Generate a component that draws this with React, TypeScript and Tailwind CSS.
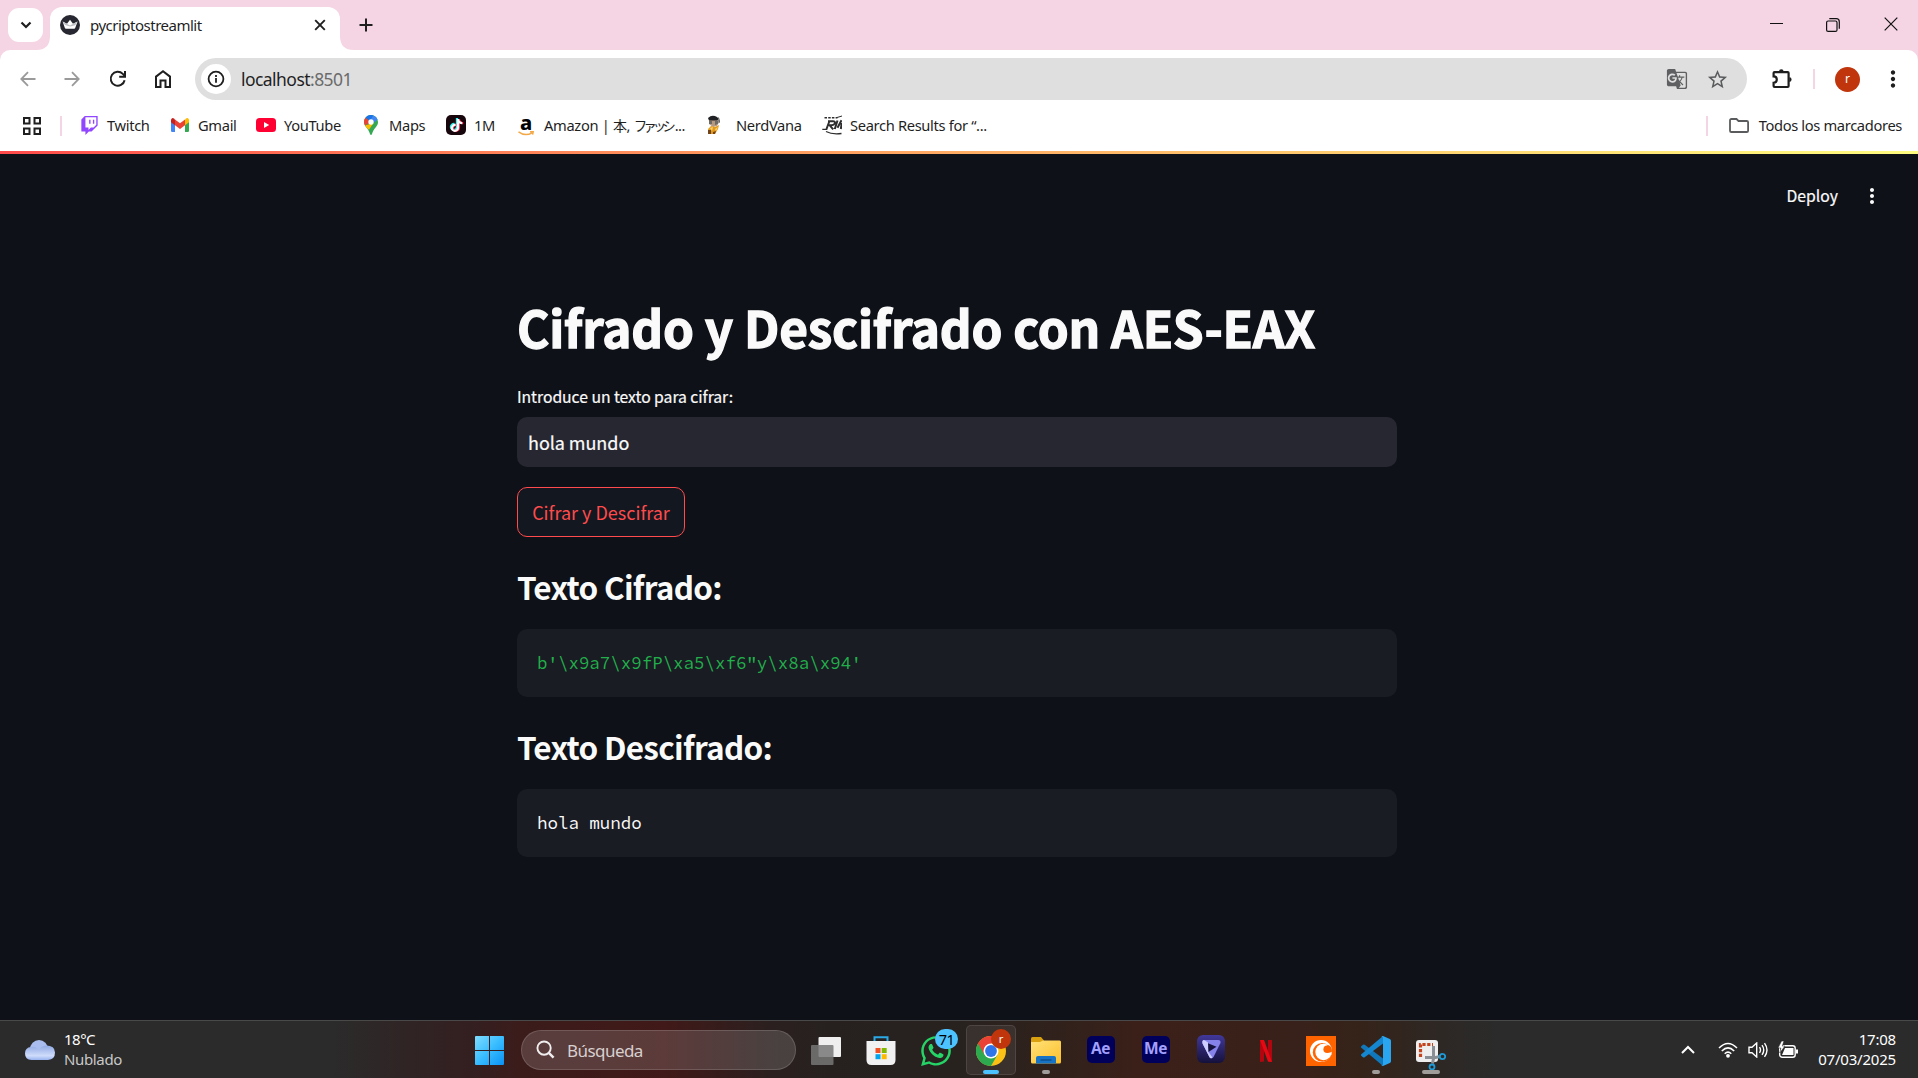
import type { ReactNode } from "react";
import { FaWhatsapp, FaTiktok } from "react-icons/fa";
import { SiTwitch } from "react-icons/si";
import { MdMoreVert, MdGTranslate, MdStarBorder } from "react-icons/md";

function CrownIcon() {
  return (
    <svg width="20" height="20" viewBox="0 0 20 20" className="shrink-0">
      <circle cx="10" cy="10" r="10" fill="#262730" />
      <path d="M2.6 6.6 7 8.8 10 4.8l3 4 4.6-2.2-2.3 6.2q-.3.9-1.2.9H6q-.9 0-1.2-.9z" fill="#fff" />
      <path d="M2.6 6.6 10 10.4l7.4-3.8-2.1 3.6L10 11.6l-5-1.6z" fill="#bfc0c4" />
    </svg>
  );
}

function TabStrip() {
  return (
    <div className="flex h-[50px] bg-[#f5d4e3] text-[#1f1f1f]">
      <div className="ml-2 mt-2 flex h-[34px] w-[35px] items-center justify-center rounded-[11px] bg-white">
        <svg width="12" height="8" viewBox="0 0 12 8" fill="none" stroke="#1f1f1f" strokeWidth="2.2"><path d="m1.5 1.5 4.5 4.5 4.5-4.5" /></svg>
      </div>
      <div className="flex w-[7px] items-end">
        <svg width="14" height="14" viewBox="0 0 14 14" className="-ml-[7px] shrink-0"><path d="M14 0v14H0Q14 14 14 0z" fill="#fff" /></svg>
      </div>
      <div className="mt-[7px] flex h-[43px] w-[290px] items-center rounded-t-[12px] bg-white pb-[7px] pl-[10px] pr-[14px]">
        <CrownIcon />
        <span className="ml-[10px] flex-1 whitespace-nowrap text-[15px] tracking-[-0.5px]">pycriptostreamlit</span>
        <svg width="12" height="12" viewBox="0 0 12 12" stroke="#1f1f1f" strokeWidth="1.9"><path d="m1.2 1.2 9.6 9.6M10.8 1.2 1.2 10.8" /></svg>
      </div>
      <div className="flex items-end">
        <svg width="14" height="14" viewBox="0 0 14 14"><path d="M0 0v14h14Q0 14 0 0z" fill="#fff" /></svg>
      </div>
      <svg width="14" height="14" viewBox="0 0 14 14" stroke="#1f1f1f" strokeWidth="2" className="ml-[5px] mt-[18px]"><path d="M7 .5v13M.5 7h13" /></svg>
      <div className="ml-auto mt-[17px] flex pr-5">
        <svg width="13" height="15" viewBox="0 0 13 15" className="mr-[43px]"><path d="M0 6.5h13" stroke="#111" strokeWidth="1" /></svg>
        <svg width="14" height="14" viewBox="0 0 14 14" fill="none" stroke="#111" strokeWidth="1.2" className="mr-[44px] mt-px"><rect x=".6" y="3" width="10.4" height="10.4" rx="1.5" /><path d="M3.3.7h7q3 0 3 3v7" /></svg>
        <svg width="14" height="14" viewBox="0 0 14 14" stroke="#111" strokeWidth="1.2"><path d="m.7.7 12.6 12.6M13.3.7.7 13.3" /></svg>
      </div>
    </div>
  );
}

function Arrow({ flip }: { flip?: boolean }) {
  return (
    <svg width="16" height="16" viewBox="0 0 16 16" fill="none" stroke="#9a9a9a" strokeWidth="1.8" className={flip ? "rotate-180" : ""}>
      <path d="M15.5 8H1.5M8 1.2 1.300 8 8 14.8" />
    </svg>
  );
}

function Toolbar() {
  return (
    <div className="flex h-[58px] items-center rounded-t-[10px] bg-white">
      <div className="flex w-[195px] shrink-0 items-center pl-5">
        <Arrow />
        <div className="ml-[28px]"><Arrow flip /></div>
        <svg width="18" height="18" viewBox="0 0 18 18" fill="none" stroke="#1f1f1f" strokeWidth="2" className="ml-[29px]">
          <path d="M15.6 10.2A7 7 0 1 1 13.8 3.900L16 6.2" /><path d="M16 1v5.8h-5.8" />
        </svg>
        <svg width="16" height="18" viewBox="0 0 16 18" fill="none" stroke="#1f1f1f" strokeWidth="2" className="ml-[28px]">
          <path d="M1 6.600 8 1.300l7 5.300V17h-4.500v-6.500h-5V17H1z" />
        </svg>
      </div>
      <div className="flex h-[42px] w-[1552px] shrink-0 items-center rounded-full bg-[#dfdfdf] pl-[6px] pr-[18px]">
        <div className="flex size-[30px] items-center justify-center rounded-full bg-white">
          <svg width="18" height="18" viewBox="0 0 18 18" fill="none" stroke="#1f1f1f" strokeWidth="1.8"><circle cx="9" cy="9" r="7.4" /><path d="M9 8v4.800M9 5v1.900" /></svg>
        </div>
        <span className="ml-[10px] flex-1 text-[17.5px] tracking-[-0.55px] text-[#1f1f1f]">localhost<span className="text-[#6b6b6b]">:8501</span></span>
        <MdGTranslate size={22} color="#5f6062" />
        <MdStarBorder size={23} color="#5a5b5d" className="ml-[18px]" />
      </div>
      <svg width="22" height="22" viewBox="0 0 22 22" fill="none" stroke="#1f1f1f" strokeWidth="2.2" className="ml-[24px]">
        <path d="M3.5 4.2h13.200q.9 0 .9.900v13q0 .9-.9.900H3.500q-.9 0-.9-.9v-3.300q3.200 0 3.200-3.200T2.600 8.400V5.100q0-.9.9-.9z" />
        <path d="M8 3.500a2.300 2.300 0 0 1 4.600 0zM18.300 9.300a2.300 2.300 0 0 1 0 4.600z" fill="#1f1f1f" stroke="none" />
      </svg>
      <div className="ml-5 h-5 w-[2px] bg-[#f5d4e3]" />
      <div className="ml-[20px] flex size-[25px] items-center justify-center rounded-full bg-[#c0350c] text-[12px] text-white">r</div>
      <MdMoreVert size={26} color="#1f1f1f" className="ml-[20px]" />
    </div>
  );
}

function YoutubeIcon() {
  return <svg width="20" height="14" viewBox="0 0 20 14"><rect width="20" height="14" rx="3.5" fill="#f03" /><path d="m8 4 5.200 3L8 10z" fill="#fff" /></svg>;
}

function GmailIcon() {
  return (
    <svg width="18" height="14" viewBox="0 0 18 14">
      <path d="M0 3h4v11H1.300Q0 14 0 12.700z" fill="#4285f4" />
      <path d="M14 3h4v9.700q0 1.300-1.300 1.300H14z" fill="#34a853" />
      <path d="M14 1.400 15 .6q2-1.400 3 1v2.600L14 7.300z" fill="#fbbc04" />
      <path d="M4 1.400 3 .6q-2-1.400-3 1v2.600l4 3.100z" fill="#c5221f" />
      <path d="M4 1.400 9 5.200l5-3.800v5.900l-5 3.800-5-3.800z" fill="#ea4335" />
    </svg>
  );
}

function MapsIcon() {
  return (
    <svg width="14" height="20" viewBox="0 0 14 20">
      <path d="M7 0a7 7 0 0 1 7 7c0 4.800-4.400 6-6 12q-1 2-2 0C4.500 13 0 11.800 0 7a7 7 0 0 1 7-7z" fill="#34a853" />
      <path d="M1 10.500 9.500 8 5 14.800Q2 12.500 1 10.500z" fill="#fbbc04" />
      <path d="M1.600 2.500 7 7 1 10.600Q-1.200 6 1.600 2.500z" fill="#ea4335" />
      <path d="M1.600 2.500Q5-1.200 9.400.4L6 6.500z" fill="#1a73e8" />
      <path d="M9.300.4q3.200 1 4.300 4.300L8.500 8.500 6 6z" fill="#4285f4" />
      <circle cx="7" cy="7" r="2.700" fill="#fff" />
    </svg>
  );
}

function TiktokIcon() {
  return (
    <div className="relative size-5 rounded-[5px] bg-[#17070c]">
      <FaTiktok size={13} color="#25f4ee" className="absolute left-[3px] top-[3px]" />
      <FaTiktok size={13} color="#fe2c55" className="absolute left-[4.5px] top-[4px]" />
      <FaTiktok size={13} color="#fff" className="absolute left-[3.7px] top-[3.5px]" />
    </div>
  );
}

function AmazonIcon() {
  return (
    <div className="relative h-5 w-4 text-center">
      <span className="absolute inset-x-0 -top-[3px] font-['Noto_Sans'] text-[20px] font-extrabold leading-[20px] text-black">a</span>
      <svg width="16" height="5" viewBox="0 0 16 5" fill="none" stroke="#f3a847" strokeWidth="1.5" className="absolute bottom-0 left-0"><path d="M.5.8q7 5 13.500 1M12 .7l3.200-.1-.6 3" /></svg>
    </div>
  );
}

function NerdIcon() {
  return (
    <svg width="12" height="20" viewBox="0 0 12 20">
      <path d="M1 5h8l2 2-2 4-4 1-4-3z" fill="#b69a80" />
      <path d="M0 3q4-4 9-1l2 2-2 1.500H1z" fill="#202124" />
      <path d="M1 6h3v3H1zM7 6l4-1-1 4-3 1z" fill="#6e6a66" />
      <path d="m3 11 4 1 4-2-1 4-3 5H1l-1-5z" fill="#e39a1c" />
      <path d="m2 13 3-1-1 4zM7 14l3-2-2 4z" fill="#fbd36b" />
      <path d="M0 15h3v4H0zM5 17l3-1-1 3H5z" fill="#70441c" />
      <path d="M10.5 2.500 12 8" stroke="#5b5b5b" />
    </svg>
  );
}

function RimIcon() {
  return (
    <svg width="20" height="20" viewBox="0 0 20 20" fill="none" stroke="#2d2d2d">
      <path d="M2.5 2.700h13" strokeWidth="1.6" strokeDasharray="2.5 1.2" />
      <path d="M15 2.500 20 1" strokeWidth="1" />
      <path d="M6 6.200h5q2.500 0 1.700 2.300-.6 1.800-3.200 1.800H7.700l3.500 4M7.300 6.500 4.500 14M15.500 5.500 12.800 14M19.500 5.200l-4 7.500M19.800 8l-1 6" strokeWidth="2" />
      <path d="M.3 14.300h5M4 16.500q6 3.200 15.500 2" strokeWidth="1.3" />
    </svg>
  );
}

function Bookmark({ icon, children, className = "" }: { icon: ReactNode; children: ReactNode; className?: string }) {
  return (
    <div className={`flex shrink-0 items-center ${className}`}>
      <div className="flex w-5 justify-center">{icon}</div>
      <span className="ml-2 whitespace-nowrap">{children}</span>
    </div>
  );
}

function BookmarksBar() {
  return (
    <div className="flex h-[43px] items-center bg-white pb-[8px] text-[14.7px] tracking-[-0.34px] text-[#1f1f1f]">
      <svg width="18" height="18" viewBox="0 0 18 18" fill="none" stroke="#1f1f1f" strokeWidth="2" className="ml-[23px] shrink-0">
        <path d="M1 1h5.500v5.500H1zM11.500 1H17v5.500h-5.500zM1 11.500h5.500V17H1zM11.500 11.500H17V17h-5.500z" />
      </svg>
      <div className="ml-[19px] h-5 w-[2px] bg-[#f5d4e3]" />
      <Bookmark className="ml-[17px] w-[91px]" icon={<SiTwitch size={19} color="#9146ff" />}>Twitch</Bookmark>
      <Bookmark className="w-[86px]" icon={<GmailIcon />}>Gmail</Bookmark>
      <Bookmark className="w-[105px]" icon={<YoutubeIcon />}>YouTube</Bookmark>
      <Bookmark className="w-[85px]" icon={<MapsIcon />}>Maps</Bookmark>
      <Bookmark className="w-[70px]" icon={<TiktokIcon />}>1M</Bookmark>
      <Bookmark className="w-[188px]" icon={<AmazonIcon />}>Amazon | <span className="text-[14px]">本</span>, <span className="text-[13.5px] tracking-[-4px]">ファッシ</span><span className="ml-[3px] tracking-[-0.5px]">...</span></Bookmark>
      <Bookmark className="w-[118px]" icon={<NerdIcon />}><span className="ml-[4px]">NerdVana</span></Bookmark>
      <Bookmark icon={<RimIcon />}>Search Results for “...</Bookmark>
      <div className="ml-auto h-5 w-[2px] bg-[#f5d4e3]" />
      <svg width="20" height="15" viewBox="0 0 20 15" fill="none" stroke="#5a5b5d" strokeWidth="1.8" className="ml-[21px]"><path d="M1 2.500Q1 1 2.500 1h5l2 2h8.300q1.300 0 1.300 1.300v8.400q0 1.300-1.300 1.300H2.300Q1 14 1 12.700z" /></svg>
      <span className="ml-[10px] mr-4 whitespace-nowrap tracking-[-0.35px]">Todos los marcadores</span>
    </div>
  );
}

function CodeBlock({ children, className }: { children: ReactNode; className: string }) {
  return (
    <div className={`flex h-[68px] items-center whitespace-pre rounded-[10px] bg-[#1a1c24] px-5 font-['Source_Code_Pro','DejaVu_Sans_Mono',monospace] text-[17.5px] tracking-[-0.03px] ${className}`}>
      {children}
    </div>
  );
}

function StreamlitPage() {
  return (
    <div className="h-[869px] bg-[#0e1117] font-['Noto_Sans_CJK_JP',sans-serif] text-[#fafafa]">
      <div className="h-[3px] bg-linear-to-r from-[#ff4b4b] to-[#fffd80]" />
      <div className="flex h-[84px] items-center justify-end pr-[34px]">
        <span className="mr-[22px] text-[15.75px] [-webkit-text-stroke:0.2px_#fafafa]">Deploy</span>
        <MdMoreVert size={24} color="#fafafa" />
      </div>
      <div className="ml-[517px] w-[880px] pt-[55px]">
        <h1 className="h-[68px] whitespace-nowrap text-[49.5px] font-bold leading-[68px] tracking-[-0.2px] [-webkit-text-stroke:1.3px_#fafafa]">Cifrado y Descifrado con AES-EAX</h1>
        <label className="mt-[22px] block h-[28px] text-[15.75px] leading-[28px] tracking-[-0.05px] [-webkit-text-stroke:0.2px_#fafafa]">Introduce un texto para cifrar:</label>
        <div className="mt-[6px] flex h-[50px] items-center rounded-[10px] bg-[#262730] pl-[11px] text-[18px] tracking-[-0.05px] [-webkit-text-stroke:0.2px_#fafafa]">hola mundo</div>
        <button className="mt-5 block h-[50px] w-[168px] whitespace-nowrap rounded-[10px] border border-[#ff4b4b] bg-[#131720] text-[18px] text-[#ff4b4b]">Cifrar y Descifrar</button>
        <h3 className="mt-[28px] h-[42px] text-[31.5px] font-semibold leading-[42px] tracking-[-0.7px]">Texto Cifrado:</h3>
        <CodeBlock className="mt-[22px] text-[#21b04a]">{"b'\\x9a7\\x9fP\\xa5\\xf6\"y\\x8a\\x94'"}</CodeBlock>
        <h3 className="mt-[28px] h-[42px] text-[31.5px] font-semibold leading-[42px] tracking-[-0.7px]">Texto Descifrado:</h3>
        <CodeBlock className="mt-[22px] text-[#fafafa]">hola mundo</CodeBlock>
      </div>
    </div>
  );
}

function CloudIcon() {
  return (
    <svg width="30" height="20" viewBox="0 0 30 20">
      <defs><linearGradient id="cloud" x2="0" y2="1"><stop stopColor="#8fa9e4" /><stop offset=".7" stopColor="#cfdcfb" /><stop offset="1" stopColor="#9ab3f0" /></linearGradient></defs>
      <circle cx="14" cy="9" r="9" fill="#a9bdf0" />
      <path d="M6 7q5-1 7.500 3Q16 6 21 5.500q9 0 9 7T23 20H6.500Q0 19.500 0 13.500T6 7z" fill="url(#cloud)" />
    </svg>
  );
}

function ChromeIcon() {
  return (
    <svg width="30" height="30" viewBox="0 0 30 30">
      <circle cx="15" cy="15" r="15" fill="#fbc116" />
      <path d="M2 7.500A15 15 0 0 0 15 30l6.500-11.300L15 15z" fill="#2da94f" />
      <path d="M2 7.500A15 15 0 0 1 28 7.500H15v7.500l-6.500 3.700z" fill="#ea4335" />
      <circle cx="15" cy="15" r="7.500" fill="#fff" /><circle cx="15" cy="15" r="5.900" fill="#2f74e8" />
    </svg>
  );
}

function StoreIcon() {
  return (
    <svg width="30" height="30" viewBox="0 0 30 30">
      <path d="M8.5 6V1.200h13V6" fill="none" stroke="#2aa9e6" strokeWidth="2" />
      <path d="M.5 5h29v19q0 5-5 5h-19q-5 0-5-5z" fill="#f1f1f1" />
      <path fill="#f25022" d="M9.500 12h5v5h-5z" /><path fill="#7fba00" d="M15.700 12h5v5h-5z" />
      <path fill="#00a4ef" d="M9.500 18.200h5v5h-5z" /><path fill="#ffb900" d="M15.700 18.200h5v5h-5z" />
    </svg>
  );
}

function ExplorerIcon() {
  return (
    <svg width="30" height="27" viewBox="0 0 30 27">
      <defs><linearGradient id="folder" x2="1" y2="1"><stop stopColor="#ffe178" /><stop offset="1" stopColor="#fbc02d" /></linearGradient></defs>
      <path d="M0 1.500Q0 0 1.500 0H10l3 3.500V9H0z" fill="#d9a010" />
      <path d="M0 5h9l3-1.500h16.500q1.500 0 1.500 1.500v20q0 1.500-1.500 1.500h-27Q0 26.500 0 25z" fill="url(#folder)" />
      <path d="M5 26.500V21q0-2 2-2h16q2 0 2 2v5.500z" fill="#1673c5" /><path d="M9.500 23h11" stroke="#0c4f91" strokeWidth="1.5" />
    </svg>
  );
}

function AdobeTile({ label }: { label: string }) {
  return <div className="-mt-[2px] flex h-[27px] w-7 items-center justify-center rounded-[5px] bg-[#00005b] pb-px font-['Open_Sans'] text-[15.5px] font-bold tracking-[-0.4px] text-[#a3a0ff]">{label}</div>;
}

function DavinciIcon() {
  return (
    <svg width="28" height="28" viewBox="0 0 28 28" className="-mt-1">
      <defs><linearGradient id="dv" x2="0" y2="1"><stop stopColor="#41389a" /><stop offset="1" stopColor="#15113c" /></linearGradient></defs>
      <rect width="28" height="28" rx="6" fill="url(#dv)" />
      <path d="M7 5h14q3.500.3 2.300 3.200L16.500 22q-2 2.600-4 .3L5.500 8.500Q4.800 5.300 7 5z" fill="#8583ea" />
      <path d="M5.500 8.500Q4.800 5.300 7 5l4 2.500.5 9.500 4 5.500q-2 1.500-3-.2z" fill="#cdceff" />
      <path d="m11 8.200 8.500 3.600L11.500 17z" fill="#17133f" />
    </svg>
  );
}

function NetflixIcon() {
  return (
    <svg width="12" height="22" viewBox="0 0 12 22">
      <path d="M0 0h4v21.500L0 22zM8 0h4v22l-4-.5z" fill="#b1060f" />
      <path d="M0 0h4l8 22-4-.5z" fill="#e50914" />
    </svg>
  );
}

function CrunchyrollIcon() {
  return (
    <svg width="30" height="30" viewBox="0 0 30 30">
      <path fill="#ff6400" d="M0 0h30v30H0z" />
      <circle cx="15" cy="15" r="11" fill="#fff" />
      <circle cx="16.2" cy="16.4" r="9.4" fill="#ff6400" />
      <circle cx="17.5" cy="16" r="8.2" fill="#fff" />
      <circle cx="21.200" cy="13.200" r="3.800" fill="#ff6400" />
      <path d="M21 9.500q2.800-.8 4.500 2.500.7 2 .3 4-2.500 1-4.500-.5z" fill="#ff6400" />
    </svg>
  );
}

function VscodeIcon() {
  return (
    <svg width="30" height="30" viewBox="0 0 30 30">
      <path d="M0 10.500 2 8.700q.8-.6 1.700 0L22 22.500V30L.3 11.700q-.7-.6-.3-1.200z" fill="#1177bb" />
      <path d="M0 19.500l2 1.800q.8.600 1.700 0L22 7.500V0L.3 18.300q-.7.600-.3 1.200z" fill="#1487d0" />
      <path d="M22 0 28.800 3Q30 3.500 30 4.800v20.400q0 1.300-1.200 1.800L22 30q-1 .3-1.800-.5Q22 30 22 28V2q0-2-1.800-1.500Q21-.3 22 0z" fill="#2aa5ef" />
    </svg>
  );
}

function SnipIcon() {
  return (
    <svg width="30" height="30" viewBox="0 0 30 30" fill="none">
      <rect width="22" height="22" rx="3" fill="#eee" />
      <path d="M4.5 17V4.500H17" stroke="#c3431d" strokeWidth="3.2" strokeDasharray="3.2 1.6" />
      <path d="M17.5 6v12.500l-1 5M9 17.500h10.500l4.500-1" stroke="#8a8f95" strokeWidth="3" />
      <circle cx="26.5" cy="16.500" r="2.700" stroke="#1d9bd8" strokeWidth="1.8" /><circle cx="16" cy="27" r="2.500" stroke="#1d9bd8" strokeWidth="1.8" />
    </svg>
  );
}

function TaskItem({ children, running }: { children: ReactNode; running?: "dot" | "wide" }) {
  return (
    <div className="relative flex h-full w-[55px] shrink-0 items-center justify-center pt-[2px]">
      {children}
      {running === "dot" && <div className="absolute bottom-[4px] h-1 w-2 rounded-full bg-[#a09c9a]" />}
      {running === "wide" && <div className="absolute bottom-[4px] h-1 w-[18px] rounded-full bg-[#a09c9a]" />}
    </div>
  );
}

function Taskbar() {
  return (
    <div className="flex h-[58px] items-center border-t border-[#494949] bg-[#2b2b2b] bg-[linear-gradient(90deg,#2b2b2b_0,#2b2b2b_330px,#341f20_470px,#3b1c1b_520px,#401918_665px,#2b201f_770px,#26211f_830px,#28221f_960px,#33211b_1080px,#3b2019_1140px,#38211a_1300px,#352319_1360px,#2c2927_1460px,#2b2b2b_1500px)] text-[15px] text-white">
      <div className="flex w-[475px] shrink-0 items-center pl-[25px]">
        <CloudIcon />
        <div className="ml-[9px] -mt-px leading-5 tracking-[-0.5px]"><div>18°C</div><div className="tracking-[-0.35px] text-[#c8c8c8]">Nublado</div></div>
      </div>
      <svg width="29" height="29" viewBox="0 0 29 29" className="mt-[2px] shrink-0">
        <defs><linearGradient id="win" x2="1" y2="1"><stop stopColor="#7fdcff" /><stop offset=".5" stopColor="#39bdff" /><stop offset="1" stopColor="#0a91f5" /></linearGradient></defs>
        <path d="M1 0h13v14H0V1q0-1 1-1zM15 0h13q1 0 1 1v13H15zM0 15h14v14H1q-1 0-1-1zM15 15h14v13q0 1-1 1H15z" fill="url(#win)" />
      </svg>
      <div className="ml-[17px] flex h-10 w-[275px] shrink-0 items-center rounded-full border border-white/15 bg-white/15 pl-[14px]">
        <svg width="19" height="19" viewBox="0 0 20 20" fill="none" stroke="#f0eeee" strokeWidth="2"><circle cx="8.5" cy="8.500" r="7" /><path d="m13.500 13.500 5 5" strokeWidth="2.6" /></svg>
        <span className="ml-[12px] mt-[2px] text-[17px] tracking-[-0.55px] text-[#d8cfcf]">Búsqueda</span>
      </div>
      <div className="ml-[2px] flex h-full">
        <TaskItem>
          <svg width="30" height="28" viewBox="0 0 30 28"><rect x="7.5" width="22.500" height="20" rx="1" fill="#efefef" /><rect y="8" width="22.5" height="20" rx="1" fill="#777" fillOpacity=".85" /></svg>
        </TaskItem>
        <TaskItem><StoreIcon /></TaskItem>
        <TaskItem>
          <FaWhatsapp size={34} color="#25d366" />
          <div className="absolute left-[27px] top-[8px] flex h-5 w-[23px] items-center justify-center rounded-full bg-[#4cc2ff] text-[14.5px] leading-none tracking-[-0.6px] text-black">71</div>
        </TaskItem>
        <TaskItem>
          <div className="absolute left-[3px] top-[4px] h-[50px] w-[50px] rounded-[5px] border border-white/10 bg-white/7" />
          <div className="relative"><ChromeIcon /></div>
          <div className="absolute left-[28px] top-[8px] flex size-5 items-center justify-center rounded-full bg-[#c0350c] pb-px text-[11px] leading-none text-white">r</div>
          <div className="absolute bottom-[4px] h-1 w-4 rounded-full bg-[#4cc2ff]" />
        </TaskItem>
        <TaskItem running="dot"><ExplorerIcon /></TaskItem>
        <TaskItem><AdobeTile label="Ae" /></TaskItem>
        <TaskItem><AdobeTile label="Me" /></TaskItem>
        <TaskItem><DavinciIcon /></TaskItem>
        <TaskItem><NetflixIcon /></TaskItem>
        <TaskItem><CrunchyrollIcon /></TaskItem>
        <TaskItem running="dot"><VscodeIcon /></TaskItem>
        <TaskItem running="wide"><div className="mt-2"><SnipIcon /></div></TaskItem>
      </div>
      <div className="ml-auto flex items-center pr-[22px]">
        <svg width="14" height="9" viewBox="0 0 14 9" fill="none" stroke="#fff" strokeWidth="2" className="mr-[23px]"><path d="M1 8l6-6 6 6" /></svg>
        <svg width="20" height="16" viewBox="0 0 20 16" fill="none" stroke="#fff" strokeWidth="1.5" className="mr-[10px]"><path d="M1 6q9-9 18 0M3.800 9q6.200-6.200 12.400 0M6.700 11.700q3.300-3.200 6.600 0" /><circle cx="10" cy="13.800" r="1.900" fill="#fff" stroke="none" /></svg>
        <svg width="20" height="16" viewBox="0 0 20 16" fill="none" stroke="#fff" strokeWidth="1.4" className="mr-[10px]"><path d="M1 5.200h3L8.700 1v14L4 10.800H1zM11.500 5.200q2 2.800 0 5.600M14 3.200q3.500 4.800 0 9.600M16.500 1.200q5 6.800 0 13.600" /></svg>
        <svg width="20" height="18" viewBox="0 0 20 18" className="mr-[15px]"><rect x="1.7" y="4.700" width="15.500" height="11.500" rx="2.500" fill="none" stroke="#fff" strokeWidth="1.4" /><path d="M7 7h8.500v7H4zM18 8.500h2v4h-2z" fill="#fff" /><path d="M3.500 0 0 7h2.800l-1 5L7 5H4.300L6 0z" fill="#fff" stroke="#2b2b2b" strokeWidth=".6" /></svg>
        <div className="-mt-[2px] w-[83px] text-right leading-5 tracking-[-0.2px]"><div>17:08</div><div className="whitespace-nowrap">07/03/2025</div></div>
      </div>
    </div>
  );
}

export default function App() {
  return (
    <div className="h-[1078px] w-[1918px] overflow-hidden bg-[#f5d4e3] font-['Segoe_UI','Noto_Sans','Noto_Sans_CJK_JP',sans-serif]">
      <TabStrip />
      <Toolbar />
      <BookmarksBar />
      <StreamlitPage />
      <Taskbar />
    </div>
  );
}
